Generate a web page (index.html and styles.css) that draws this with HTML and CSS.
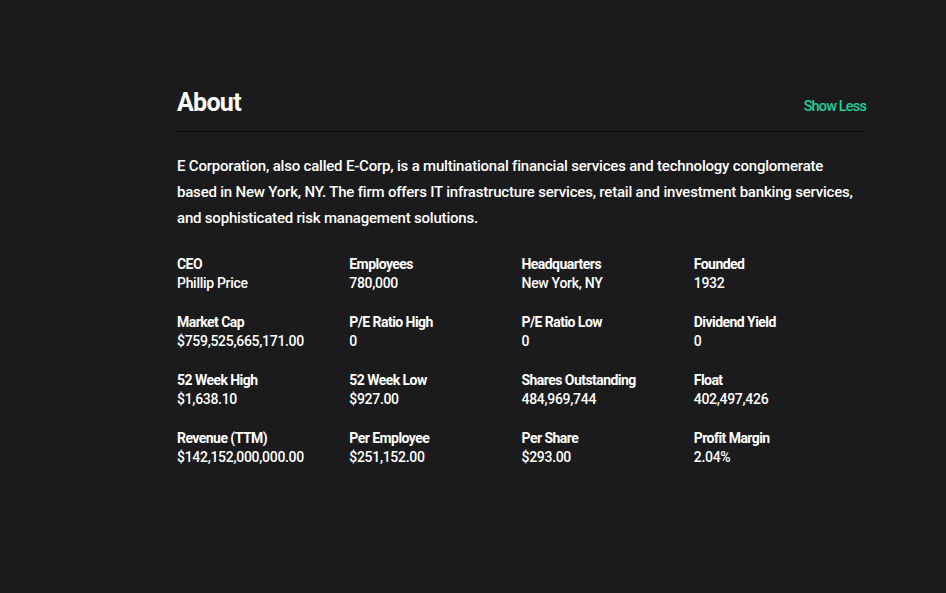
FILE: index.html
```html
<!DOCTYPE html>
<html>
<head>
<meta charset="utf-8">
<link rel="stylesheet" href="styles.css">
</head>
<body>
<section class="about">
  <header class="about-head">
    <h2 class="title">About</h2>
    <a class="toggle">Show Less</a>
  </header>
  <p class="desc">E Corporation, also called E-Corp, is a multinational financial services and technology conglomerate based in New York, NY. The firm offers IT infrastructure services, retail and investment banking services, and sophisticated risk management solutions.</p>
  <div class="stats">
    <div class="stat"><div class="label">CEO</div><div class="value">Phillip Price</div></div>
    <div class="stat"><div class="label">Employees</div><div class="value">780,000</div></div>
    <div class="stat"><div class="label">Headquarters</div><div class="value">New York, NY</div></div>
    <div class="stat"><div class="label">Founded</div><div class="value">1932</div></div>
    <div class="stat"><div class="label">Market Cap</div><div class="value">$759,525,665,171.00</div></div>
    <div class="stat"><div class="label">P/E Ratio High</div><div class="value">0</div></div>
    <div class="stat"><div class="label">P/E Ratio Low</div><div class="value">0</div></div>
    <div class="stat"><div class="label">Dividend Yield</div><div class="value">0</div></div>
    <div class="stat"><div class="label">52 Week High</div><div class="value">$1,638.10</div></div>
    <div class="stat"><div class="label">52 Week Low</div><div class="value">$927.00</div></div>
    <div class="stat"><div class="label">Shares Outstanding</div><div class="value">484,969,744</div></div>
    <div class="stat"><div class="label">Float</div><div class="value">402,497,426</div></div>
    <div class="stat"><div class="label">Revenue (TTM)</div><div class="value">$142,152,000,000.00</div></div>
    <div class="stat"><div class="label">Per Employee</div><div class="value">$251,152.00</div></div>
    <div class="stat"><div class="label">Per Share</div><div class="value">$293.00</div></div>
    <div class="stat"><div class="label">Profit Margin</div><div class="value">2.04%</div></div>
  </div>
</section>
</body>
</html>
```
FILE: styles.css
```css
html, body {
  margin: 0;
  padding: 0;
  background: #1b1b1d;
  color: #ffffff;
  font-family: Roboto, "Noto Sans", sans-serif;
}
.about {
  width: 689px;
  margin: 0 0 0 177px;
  padding-top: 85px;
}
.about-head {
  display: flex;
  justify-content: space-between;
  align-items: baseline;
  padding-bottom: 10px;
  border-bottom: 1px solid #0c0c0d;
}
.title {
  margin: 0;
  font-size: 25px;
  font-weight: 700;
  letter-spacing: -0.7px;
  line-height: 36px;
}
.toggle {
  color: #21ce99;
  font-size: 14.5px;
  font-weight: 500;
  letter-spacing: -0.85px;
}
.desc {
  margin: 21px 0 0;
  font-size: 15px;
  line-height: 26px;
  font-weight: 500;
  letter-spacing: -0.2px;
}
.stats {
  display: grid;
  grid-template-columns: repeat(4, 1fr);
  row-gap: 20px;
  margin-top: 24px;
}
.stat {
  font-size: 14px;
  line-height: 19px;
}
.label {
  font-weight: 700;
  letter-spacing: -0.55px;
}
.value {
  font-weight: 500;
  letter-spacing: -0.3px;
}
```
